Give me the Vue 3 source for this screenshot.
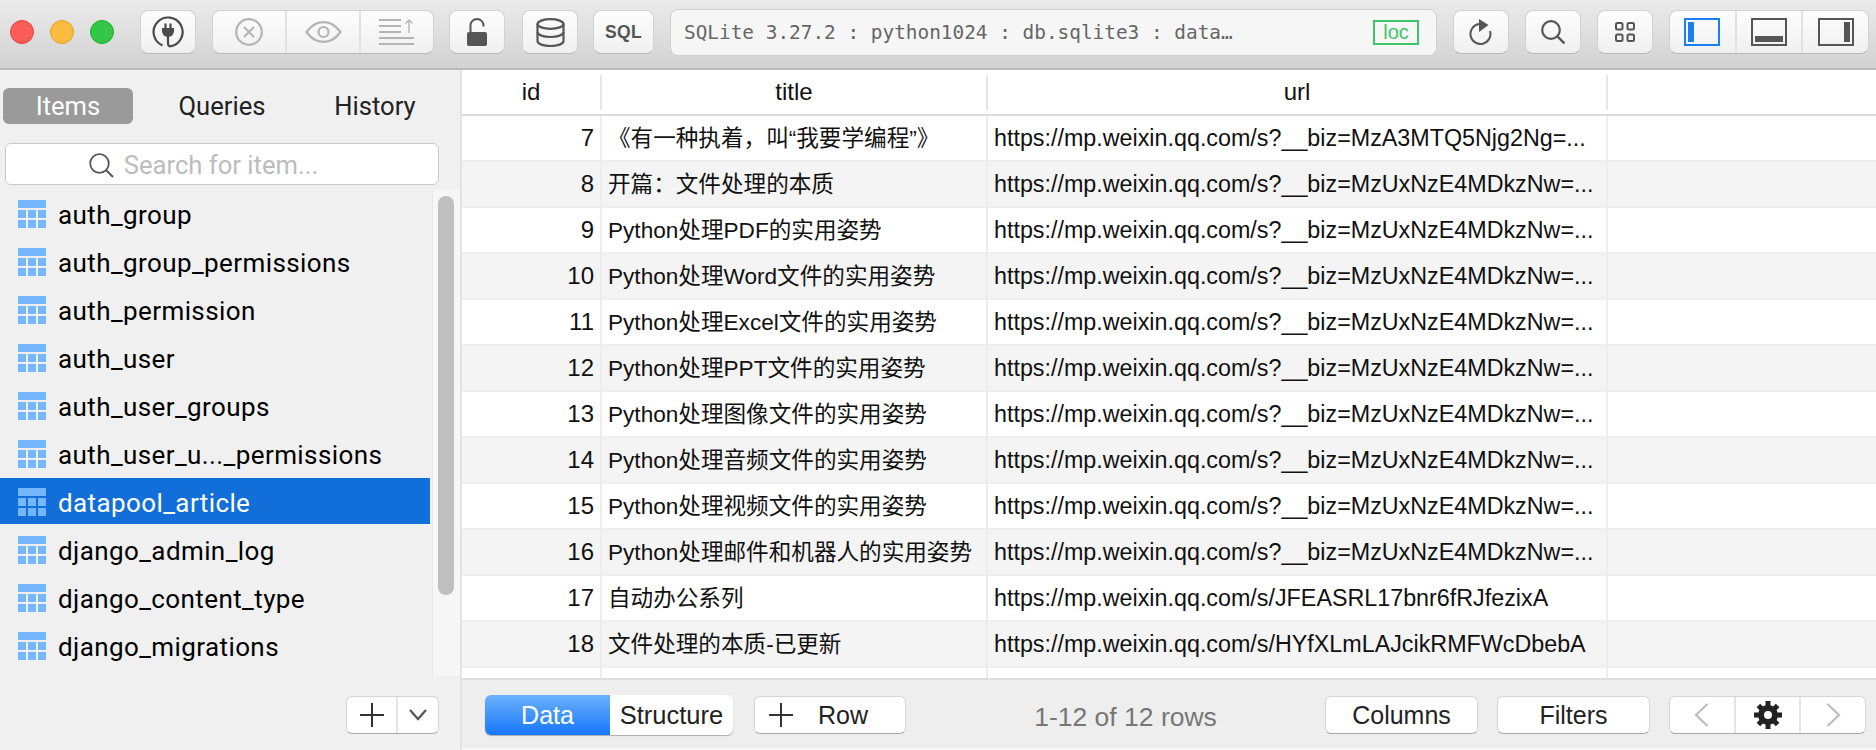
<script setup>
const tables = [
  'auth_group',
  'auth_group_permissions',
  'auth_permission',
  'auth_user',
  'auth_user_groups',
  'auth_user_u..._permissions',
  'datapool_article',
  'django_admin_log',
  'django_content_type',
  'django_migrations'
]

const bizA = 'https://mp.weixin.qq.com/s?__biz=MzA3MTQ5Njg2Ng=...'
const bizU = 'https://mp.weixin.qq.com/s?__biz=MzUxNzE4MDkzNw=...'

const rows = [
  { id: 7, title: '《有一种执着，叫“我要学编程”》', url: bizA },
  { id: 8, title: '开篇：文件处理的本质', url: bizU },
  { id: 9, title: 'Python处理PDF的实用姿势', url: bizU },
  { id: 10, title: 'Python处理Word文件的实用姿势', url: bizU },
  { id: 11, title: 'Python处理Excel文件的实用姿势', url: bizU },
  { id: 12, title: 'Python处理PPT文件的实用姿势', url: bizU },
  { id: 13, title: 'Python处理图像文件的实用姿势', url: bizU },
  { id: 14, title: 'Python处理音频文件的实用姿势', url: bizU },
  { id: 15, title: 'Python处理视频文件的实用姿势', url: bizU },
  { id: 16, title: 'Python处理邮件和机器人的实用姿势', url: bizU },
  { id: 17, title: '自动办公系列', url: 'https://mp.weixin.qq.com/s/JFEASRL17bnr6fRJfezixA' },
  { id: 18, title: '文件处理的本质-已更新', url: 'https://mp.weixin.qq.com/s/HYfXLmLAJcikRMFWcDbebA' }
]
</script>

<template>
  <div class="window">
    <header class="titlebar">
      <div class="lights">
        <span class="light red"></span>
        <span class="light yellow"></span>
        <span class="light green"></span>
      </div>

      <button class="tool plug">
        <svg width="32" height="32" viewBox="0 0 32 32" fill="none" stroke="#4a4a4a">
          <path d="M10.500 29.400A14.500 14.500 0 1 1 18 30.400" stroke-width="2.200"/>
          <path d="M10 12h12v3a6 6 0 0 1-12 0z" fill="#4a4a4a" stroke="none"/>
          <path d="M13.500 7.500V12M18.500 7.500V12" stroke-width="2.200"/>
          <path d="M16 20v7q0 3 2 3.400" stroke-width="2.200"/>
        </svg>
      </button>

      <div class="group conn-group">
        <button class="seg">
          <svg width="28" height="28" viewBox="0 0 28 28" fill="none" stroke="#b4b4b4" stroke-width="2.200">
            <circle cx="14" cy="14" r="12.800"/>
            <path d="M9 9l10 10M19 9L9 19" stroke-width="2"/>
          </svg>
        </button>
        <button class="seg">
          <svg width="37" height="22" viewBox="0 0 37 22" fill="none" stroke="#b4b4b4" stroke-width="2.200">
            <path d="M1.500 11C8 2.500 13 1.200 18.500 1.200S29 2.500 35.500 11C29 19.500 24 20.800 18.500 20.800S8 19.500 1.500 11z"/>
            <circle cx="18.500" cy="11" r="5"/>
          </svg>
        </button>
        <button class="seg">
          <svg width="36" height="27" viewBox="0 0 36 27" fill="none" stroke="#b4b4b4" stroke-width="1.800">
            <path d="M0 1h22M0 7h22M0 13h22"/>
            <path d="M0 19h35M0 25h35" stroke-width="2.200"/>
            <path d="M30 14V1M26.500 4.500L30 1l3.500 3.500" stroke-width="1.400"/>
          </svg>
        </button>
      </div>

      <button class="tool lock">
        <svg width="20" height="28" viewBox="0 0 20 28" fill="none">
          <path d="M3.500 15V7.500a6.500 6.500 0 0 1 13 0v1" stroke="#555" stroke-width="2"/>
          <rect x="0" y="14" width="20" height="14" rx="2" fill="#555"/>
        </svg>
      </button>

      <button class="tool db">
        <svg width="29" height="29" viewBox="0 0 29 29" fill="none" stroke="#555" stroke-width="2.200">
          <ellipse cx="14.500" cy="6" rx="13" ry="4.800"/>
          <path d="M1.500 6v17c0 3 6 5 13 5s13-2 13-5V6"/>
          <path d="M1.500 14c0 3 6 5 13 5s13-2 13-5"/>
        </svg>
      </button>

      <button class="tool sql">SQL</button>

      <div class="address">
        <span class="address-text">SQLite 3.27.2 : python1024 : db.sqlite3 : data…</span>
        <span class="loc">loc</span>
      </div>

      <button class="tool reload">
        <svg width="24" height="26" viewBox="0 0 24 26" fill="none">
          <path d="M10 5.100A10 10 0 1 0 21 12" stroke="#555" stroke-width="2"/>
          <path d="M10 0l9.500 6L10 13z" fill="#555"/>
        </svg>
      </button>

      <button class="tool search-btn">
        <svg width="24" height="24" viewBox="0 0 24 24" fill="none" stroke="#555">
          <circle cx="10" cy="10" r="8.800" stroke-width="2.200"/>
          <path d="M16.500 16.500l7 7" stroke-width="2.400"/>
        </svg>
      </button>

      <button class="tool grid-btn">
        <svg width="20" height="20" viewBox="0 0 20 20" fill="none" stroke="#555" stroke-width="2">
          <rect x="1" y="1" width="6.500" height="6.500" rx="1.500"/>
          <rect x="12.500" y="1" width="6.500" height="6.500" rx="1.500"/>
          <rect x="1" y="12.500" width="6.500" height="6.500" rx="1.500"/>
          <rect x="12.500" y="12.500" width="6.500" height="6.500" rx="1.500"/>
        </svg>
      </button>

      <div class="group layout-group">
        <button class="seg">
          <svg width="36" height="28" viewBox="0 0 36 28" fill="none">
            <rect x="1" y="1" width="34" height="26" stroke="#1a7ff5" stroke-width="2"/>
            <rect x="4" y="4" width="6" height="20" fill="#1a7ff5"/>
          </svg>
        </button>
        <button class="seg">
          <svg width="36" height="28" viewBox="0 0 36 28" fill="none">
            <rect x="1" y="1" width="34" height="26" stroke="#555" stroke-width="2"/>
            <rect x="4" y="18" width="28" height="6" fill="#555"/>
          </svg>
        </button>
        <button class="seg">
          <svg width="36" height="28" viewBox="0 0 36 28" fill="none">
            <rect x="1" y="1" width="34" height="26" stroke="#555" stroke-width="2"/>
            <rect x="26" y="4" width="6" height="20" fill="#555"/>
          </svg>
        </button>
      </div>
    </header>

    <div class="main">
      <aside class="sidebar">
        <div class="tabs">
          <span class="tab active">Items</span>
          <span class="tab">Queries</span>
          <span class="tab">History</span>
        </div>
        <div class="search">
          <svg width="25" height="25" viewBox="0 0 25 25" fill="none" stroke="#555">
            <circle cx="10.500" cy="10.500" r="9.300" stroke-width="1.800"/>
            <path d="M17 17l7 7" stroke-width="2"/>
          </svg>
          <span>Search for item...</span>
        </div>
        <div class="list-wrap">
          <ul class="list">
            <li v-for="name in tables" :key="name" :class="{ selected: name === 'datapool_article' }">
              <svg class="table-icon" width="28" height="28" viewBox="0 0 28 28" fill="#75b7ff">
                <rect width="28" height="8"/>
                <rect y="10" width="8" height="8"/>
                <rect x="10" y="10" width="8" height="8"/>
                <rect x="20" y="10" width="8" height="8"/>
                <rect y="20" width="8" height="8"/>
                <rect x="10" y="20" width="8" height="8"/>
                <rect x="20" y="20" width="8" height="8"/>
              </svg>
              <span class="table-name">{{ name }}</span>
            </li>
          </ul>
          <div class="scroll-track"><div class="scroll-thumb"></div></div>
        </div>
        <div class="side-foot">
          <div class="btn-pair">
            <button class="foot-seg plus">
              <svg width="24" height="24" viewBox="0 0 24 24" stroke="#333" stroke-width="2"><path d="M12 0v24M0 12h24"/></svg>
            </button>
            <button class="foot-seg chev">
              <svg width="20" height="12" viewBox="0 0 20 12" fill="none" stroke="#555" stroke-width="2.200"><path d="M2 1l8 9 8-9"/></svg>
            </button>
          </div>
        </div>
      </aside>

      <section class="content">
        <div class="table">
          <div class="row head">
            <div class="cell c-id"><span>id</span></div>
            <div class="cell c-title"><span>title</span></div>
            <div class="cell c-url"><span>url</span></div>
            <div class="cell c-rest"></div>
          </div>
          <div v-for="r in rows" :key="r.id" class="row">
            <div class="cell c-id">{{ r.id }}</div>
            <div class="cell c-title">{{ r.title }}</div>
            <div class="cell c-url">{{ r.url }}</div>
            <div class="cell c-rest"></div>
          </div>
          <div class="row filler">
            <div class="cell c-id"></div>
            <div class="cell c-title"></div>
            <div class="cell c-url"></div>
            <div class="cell c-rest"></div>
          </div>
        </div>

        <footer class="footer">
          <div class="switch">
            <span class="switch-on">Data</span>
            <span class="switch-off">Structure</span>
          </div>
          <button class="foot-btn row-btn">
            <svg width="24" height="24" viewBox="0 0 24 24" stroke="#333" stroke-width="2"><path d="M12 0v24M0 12h24"/></svg>
            <span>Row</span>
          </button>
          <span class="count">1-12 of 12 rows</span>
          <button class="foot-btn wide">Columns</button>
          <button class="foot-btn wide">Filters</button>
          <div class="pager">
            <button class="pager-seg">
              <svg width="15" height="24" viewBox="0 0 15 24" fill="none" stroke="#bdbdbd" stroke-width="2.200"><path d="M13.500 1L2 12l11.500 11"/></svg>
            </button>
            <button class="pager-seg mid">
              <svg width="28" height="28" viewBox="0 0 28 28">
                <circle cx="14" cy="14" r="7.500" fill="none" stroke="#222" stroke-width="5"/>
                <path d="M14 0v28M0 14h28M4.400 4.400l19.200 19.200M23.600 4.400L4.400 23.600" stroke="#222" stroke-width="5"/>
                <circle cx="14" cy="14" r="4" fill="#fff"/>
              </svg>
            </button>
            <button class="pager-seg">
              <svg width="15" height="24" viewBox="0 0 15 24" fill="none" stroke="#bdbdbd" stroke-width="2.200"><path d="M1.500 1L13 12 1.500 23"/></svg>
            </button>
          </div>
        </footer>
      </section>
    </div>
  </div>
</template>

<style>
html, body { margin: 0; background: #f0f0f0; }
</style>

<style scoped>
.window { width: 1876px; height: 750px; display: flex; flex-direction: column; overflow: hidden; font-family: "Liberation Sans", "Noto Sans CJK SC", sans-serif; font-size: 24px; color: #111; background: #f0f0f0; }
button { font-family: inherit; padding: 0; cursor: default; display: flex; align-items: center; justify-content: center; }

/* toolbar */
.titlebar { height: 70px; flex-shrink: 0; box-sizing: border-box; display: flex; align-items: center; background: linear-gradient(#ebebeb, #d3d2d3); border-bottom: 2px solid #b9b9b9; padding: 0 6px 4px 10px; }
.lights { display: flex; gap: 16px; width: 130px; flex-shrink: 0; }
.light { width: 24px; height: 24px; border-radius: 50%; box-sizing: border-box; }
.red { background: #fc5b57; border: 1px solid #e04540; }
.yellow { background: #fdbc40; border: 1px solid #dfa023; }
.green { background: #33c748; border: 1px solid #1fab31; }
.tool { width: 56px; height: 44px; box-sizing: border-box; background: linear-gradient(#fdfdfd, #f0f0f0); border: 1px solid #d2d2d2; border-bottom-color: #b8b8b8; border-radius: 8px; }
.group { display: flex; height: 44px; box-sizing: border-box; background: linear-gradient(#fdfdfd, #f0f0f0); border: 1px solid #d2d2d2; border-bottom-color: #b8b8b8; border-radius: 8px; }
.seg { border: none; background: none; border-left: 2px solid #e1e1e1; }
.seg:first-child { border-left: none; }
.conn-group { width: 222px; margin-left: 16px; }
.conn-group .seg { flex: 1; }
.lock { margin-left: 15px; }
.db { margin-left: 17px; }
.sql { width: 61px; margin-left: 15px; font-size: 17.5px; font-weight: 700; letter-spacing: 0.3px; color: #555; }
.address { width: 767px; height: 47px; margin-left: 16px; box-sizing: border-box; display: flex; align-items: center; justify-content: space-between; padding: 0 17px 0 13px; background: #f6f6f6; border: 1px solid #d0d0d0; border-radius: 8px; }
.address-text { font-family: "DejaVu Sans Mono", monospace; font-size: 19.4px; color: #666; white-space: nowrap; }
.loc { width: 46px; height: 25px; box-sizing: border-box; border: 2px solid #3fc66b; color: #3fc66b; font-size: 20px; line-height: 20px; text-align: center; }
.reload { margin-left: 16px; }
.search-btn { margin-left: 16px; }
.grid-btn { margin-left: 16px; }
.layout-group { width: 200px; margin-left: 16px; }
.layout-group .seg { flex: 1; }

/* sidebar */
.main { flex: 1; display: flex; min-height: 0; }
.sidebar { width: 462px; flex-shrink: 0; box-sizing: border-box; border-right: 2px solid #e3e3e3; display: flex; flex-direction: column; background: #f0f0f0; font-family: "Roboto", "Liberation Sans", sans-serif; }
.tabs { display: flex; align-items: center; padding: 18px 0 0 3px; height: 36px; }
.tab { display: flex; align-items: center; justify-content: center; width: 130px; height: 36px; border-radius: 6px; font-size: 25.600px; color: #222; margin-left: 24px; }
.tab:last-child { margin-left: 23px; }
.tab.active { background: #9a9a9a; color: #fff; margin-left: 0; }
.search { margin: 19px 0 0 5px; width: 434px; height: 42px; box-sizing: border-box; display: flex; align-items: center; justify-content: center; gap: 10px; background: #fff; border: 1px solid #c9c9c9; border-radius: 6px; color: #bcbcbc; font-size: 25.600px; padding: 2px 37px 0 0; }
.list-wrap { display: flex; flex: 1; min-height: 0; margin-top: 5px; }
.list { list-style: none; margin: 0; padding: 0; width: 430px; flex-shrink: 0; }
.list li { height: 46px; box-sizing: border-box; margin-bottom: 2px; padding: 2px 0 0 18px; display: flex; align-items: center; gap: 12px; font-size: 26px; letter-spacing: 0.4px; color: #000; white-space: nowrap; }
.list li.selected { background: #126fd9; color: #fff; }
.table-name { padding-top: 2px; }
.table-icon { flex-shrink: 0; }
.scroll-track { width: 28px; margin-left: 2px; background: #f6f6f6; border-left: 1px solid #e9e9e9; box-sizing: border-box; padding: 6px 0 0 5px; }
.scroll-thumb { width: 16px; height: 399px; background: #bfbfbf; border-radius: 8px; }
.side-foot { height: 74px; flex-shrink: 0; display: flex; align-items: flex-start; justify-content: flex-end; padding: 20px 21px 0 0; box-sizing: border-box; }
.btn-pair { display: flex; width: 93px; height: 38px; box-sizing: border-box; background: #fff; border: 1px solid #d5d5d5; border-bottom-color: #aaa; border-radius: 6px; }
.foot-seg { border: none; background: none; }
.plus { width: 51px; border-right: 2px solid #e4e4e4; }
.chev { flex: 1; }

/* table */
.content { flex: 1; min-width: 0; display: flex; flex-direction: column; background: #fff; }
.table { height: 608px; flex-shrink: 0; overflow: hidden; background: #fff; }
.row { display: flex; height: 46px; box-sizing: border-box; border-bottom: 2px solid #ededed; }
.row:nth-child(odd) { background: #f4f4f4; }
.row:nth-child(1) { background: #fff; }
.cell { height: 100%; box-sizing: border-box; border-right: 2px solid #ededed; display: flex; align-items: center; white-space: nowrap; overflow: hidden; font-size: 23.300px; color: #111; padding: 0 6px; }
.c-id { width: 140px; justify-content: flex-end; font-size: 24px; }
.c-title { width: 386px; font-size: 22.600px; padding-bottom: 4px; }
.c-url { width: 620px; }
.c-rest { flex: 1; border-right: none; }
.row.head { border-bottom-color: #dcdcdc; padding-top: 5px; align-items: flex-start; }
.row.head .cell { height: 35px; justify-content: center; font-size: 24px; border-right-color: #e6e6e6; padding-bottom: 2px; }
.row.filler { border-bottom: none; height: 10px; background: #fff; }
.footer { flex: 1; display: flex; align-items: flex-start; box-sizing: border-box; padding: 15px 10px 0 23px; background: #eeeeee; border-top: 2px solid #dedede; border-bottom: 2px solid #f7f7f7; }
.switch { display: flex; width: 248px; height: 40px; box-sizing: border-box; border-radius: 6px; overflow: hidden; background: #fff; box-shadow: 0 1px 1px #aaa; font-size: 25px; }
.switch-on { width: 125px; display: flex; align-items: center; justify-content: center; color: #fff; background: linear-gradient(#6cb1fb, #1776fb); }
.switch-off { flex: 1; display: flex; align-items: center; justify-content: center; color: #222; font-size: 25.500px; }
.foot-btn { height: 38px; margin-top: 1px; box-sizing: border-box; background: #fff; border: 1px solid #d5d5d5; border-bottom-color: #aaa; border-radius: 6px; font-size: 25px; color: #222; }
.row-btn { width: 152px; margin-left: 21px; justify-content: flex-start; padding-left: 14px; gap: 25px; }
.count { width: 419px; box-sizing: border-box; padding-left: 20px; text-align: center; color: #777; font-size: 26.500px; line-height: 44px; }
.wide { width: 153px; }
.wide + .wide { margin-left: 19px; }
.pager { display: flex; width: 197px; height: 38px; margin: 1px 0 0 19px; box-sizing: border-box; background: #fff; border: 1px solid #d5d5d5; border-bottom-color: #aaa; border-radius: 6px; }
.pager-seg { flex: 1; border: none; background: none; }
.pager-seg.mid { border-left: 2px solid #e4e4e4; border-right: 2px solid #e4e4e4; }
</style>
